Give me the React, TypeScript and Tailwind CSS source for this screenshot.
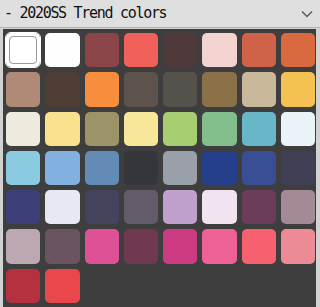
const colors: string[] = [
  "#ffffff", "#fefefe", "#8b4448", "#f2605a", "#50393a", "#f2d3d0", "#cf6248", "#d96a40",
  "#b08a77", "#4f3e36", "#f78e3e", "#5e534c", "#55524c", "#8b7148", "#c9b89a", "#f4c253",
  "#efeade", "#f9e18e", "#9c9466", "#f7e79a", "#a7cf72", "#82bf8c", "#67b7c9", "#eaf4f8",
  "#8acbe2", "#82b0df", "#628bb5", "#35363c", "#9aa0a9", "#263f8a", "#3a4e96", "#403f55",
  "#3d3f78", "#e8e8f3", "#45445f", "#635b69", "#c19fcb", "#f1e3ef", "#6b3d5b", "#a48a96",
  "#bba8b3", "#6a5462", "#de5197", "#713851", "#cc3b81", "#ee6197", "#f6606f", "#ec8b95",
  "#b4313f", "#e9474b",
];

const App = () => {
  const selected = 0;

  return (
    <div className="w-[320px] h-[307px] bg-[#d2d2d2] flex flex-col overflow-hidden">
      {/* Header */}
      <div className="h-[28px] flex-shrink-0 bg-[#dfdfdf] border-b border-[#b4b4b4] flex items-center justify-between pl-[4px] pr-[7px]">
        <span
          className="text-[15px] tracking-[-1.3px] text-[#111] leading-none"
          style={{ fontFamily: '"DejaVu Sans Mono", "Noto Sans CJK JP", monospace' }}
        >
          - 2020SS Trend colors
        </span>
        <svg width="12" height="8" viewBox="0 0 12 8" fill="none">
          <path d="M1 1.5 L6 6.5 L11 1.5" stroke="#5a5a5a" strokeWidth="1.5" />
        </svg>
      </div>

      {/* Swatches */}
      <div className="flex-1 ml-[3px] mr-[4px] mt-[1px] bg-[#3e3e3e] pt-[4px] pl-[3px] pr-[1px]">
        <div className="grid grid-cols-8 gap-[5px]">
          {colors.map((c, i) => (
            <div
              key={i}
              className={
                i === selected
                  ? "aspect-square rounded-[5px] outline outline-1 outline-white p-[3px]"
                  : "aspect-square rounded-[5px]"
              }
              style={{ backgroundColor: c }}
            >
              {i === selected && (
                <div className="w-full h-full rounded-[4px] border-[1.5px] border-[#9a9a9a]" />
              )}
            </div>
          ))}
        </div>
      </div>
    </div>
  );
};

export default App;
